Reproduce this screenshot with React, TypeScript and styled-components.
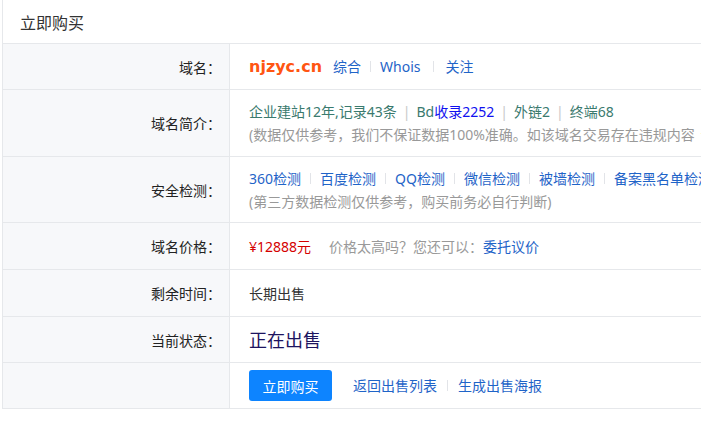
import React from "react";
import styled, { createGlobalStyle } from "styled-components";

const Global = createGlobalStyle`
  html, body { margin: 0; padding: 0; overflow: hidden; background: #fff; }
  body { font-family: "Noto Sans", "Noto Sans CJK SC", sans-serif; }
`;

const Panel = styled.div`
  margin-left: 2px;
  width: 780px;
  border-left: 1px solid #e6e8eb;
  border-right: 1px solid #e6e8eb;
  background: #fff;
`;

const Header = styled.div`
  height: 43px;
  display: flex;
  align-items: center;
  padding-left: 17px;
  font-size: 16px;
  color: #333;
  border-bottom: 1px solid #e6e8eb;
  font-family: "Noto Sans CJK SC", sans-serif;
`;

const Row = styled.div<{ $h: number }>`
  display: grid;
  grid-template-columns: 227px 1fr;
  height: ${(p) => p.$h}px;
  border-bottom: 1px solid #e6e8eb;
  box-sizing: border-box;
`;

const Label = styled.div`
  background: #f7f8fa;
  border-right: 1px solid #e6e8eb;
  display: flex;
  align-items: center;
  justify-content: flex-end;
  padding-right: 8px;
  font-size: 14px;
  color: #222;
  font-family: "Noto Sans CJK SC", sans-serif;
`;

const Value = styled.div`
  display: flex;
  flex-direction: column;
  justify-content: center;
  padding-left: 19px;
  font-size: 14px;
  line-height: 23px;
  color: #333;
  white-space: nowrap;
  overflow: hidden;
`;

const Line = styled.div`
  display: flex;
  align-items: center;
`;

const Domain = styled.span`
  font-family: "DejaVu Sans", sans-serif;
  font-weight: bold;
  font-size: 16px;
  color: #ff5512;
  margin-right: 11px;
`;

const Link = styled.a<{ $c?: string }>`
  color: ${(p) => p.$c || "#1f64c8"};
  text-decoration: none;
`;

const Sep = styled.span<{ $w?: number }>`
  display: inline-block;
  width: 1px;
  height: 11px;
  background: #e2e4e8;
  margin: 0 ${(p) => p.$w ?? 9}px;
`;

const Bar = styled.span`
  color: #c8c8c8;
  margin: 0 6px;
`;

const Teal = styled.span`
  color: #3a7a6e;
`;

const Note = styled.span`
  color: #999;
`;

const Price = styled.span`
  color: #d40000;
  margin-right: 18px;
`;

const Status = styled.span`
  font-size: 18px;
  color: #1d1460;
  font-family: "Noto Sans CJK SC", sans-serif;
`;

const BuyButton = styled.button`
  width: 83px;
  height: 31px;
  border: none;
  border-radius: 3px;
  background: #0d84ff;
  color: #fff;
  font-size: 14px;
  font-family: "Noto Sans CJK SC", sans-serif;
  margin-right: 21px;
  cursor: pointer;
`;

const Report = styled.span`
  color: #f08a00;
  margin-left: 6px;
`;

export default function App() {
  return (
    <>
      <Global />
      <Panel>
        <Header>立即购买</Header>
        <Row $h={46}>
          <Label>域名：</Label>
          <Value>
            <Line>
              <Domain>njzyc.cn</Domain>
              <Link>综合</Link>
              <Sep />
              <Link>Whois</Link>
              <Sep $w={12} />
              <Link>关注</Link>
            </Line>
          </Value>
        </Row>
        <Row $h={67}>
          <Label>域名简介：</Label>
          <Value>
            <Line>
              <Teal>企业建站12年,记录43条</Teal>
              <Bar>|</Bar>
              <Teal>Bd</Teal>
              <Link $c="#1010f0">收录2252</Link>
              <Bar>|</Bar>
              <Teal>外链2</Teal>
              <Bar>|</Bar>
              <Teal>终端68</Teal>
            </Line>
            <Line>
              <Note>(数据仅供参考，我们不保证数据100%准确。如该域名交易存在违规内容</Note>
              <Report>请点此举报</Report>
              <Note>)</Note>
            </Line>
          </Value>
        </Row>
        <Row $h={66}>
          <Label>安全检测：</Label>
          <Value>
            <Line>
              <Link>360检测</Link>
              <Sep />
              <Link>百度检测</Link>
              <Sep />
              <Link>QQ检测</Link>
              <Sep />
              <Link>微信检测</Link>
              <Sep />
              <Link>被墙检测</Link>
              <Sep />
              <Link>备案黑名单检测</Link>
            </Line>
            <Line>
              <Note>(第三方数据检测仅供参考，购买前务必自行判断)</Note>
            </Line>
          </Value>
        </Row>
        <Row $h={47}>
          <Label>域名价格：</Label>
          <Value>
            <Line>
              <Price>¥12888元</Price>
              <Note>价格太高吗？您还可以：</Note>
              <Link>委托议价</Link>
            </Line>
          </Value>
        </Row>
        <Row $h={47}>
          <Label>剩余时间：</Label>
          <Value>
            <Line>长期出售</Line>
          </Value>
        </Row>
        <Row $h={46}>
          <Label>当前状态：</Label>
          <Value>
            <Line>
              <Status>正在出售</Status>
            </Line>
          </Value>
        </Row>
        <Row $h={46}>
          <Label />
          <Value>
            <Line>
              <BuyButton>立即购买</BuyButton>
              <Link>返回出售列表</Link>
              <Sep $w={10} />
              <Link>生成出售海报</Link>
            </Line>
          </Value>
        </Row>
      </Panel>
    </>
  );
}
